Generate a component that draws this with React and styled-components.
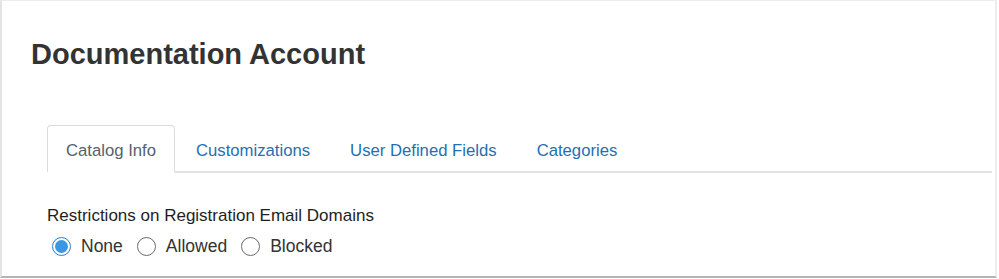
import React, { useState } from "react";
import styled, { createGlobalStyle } from "styled-components";

const Global = createGlobalStyle`
  html, body { margin: 0; padding: 0; background: #ffffff; }
  body { font-family: "Liberation Sans", Arial, Helvetica, sans-serif; }
`;

const Frame = styled.div`
  box-sizing: border-box;
  width: 997px;
  height: 278px;
  border-top: 1px solid #ececec;
  border-left: 2px solid #e4e4e4;
  border-right: 2px solid #ececec;
  border-bottom: 2px solid #b4b4b4;
  background: #fff;
  padding: 37px 0 0 29px;
`;

const Title = styled.h1`
  margin: 0;
  font-size: 29px;
  font-weight: 700;
  color: #333333;
  line-height: 32px;
`;

const Content = styled.div`
  padding: 55px 3px 0 16px;
`;

const TabBar = styled.ul`
  list-style: none;
  margin: 0;
  padding: 0;
  display: flex;
  border-bottom: 2px solid #e2e2e2;
  height: 46px;
`;

const Tab = styled.li`
  box-sizing: border-box;
  height: 48px;
  margin-bottom: -2px;
  margin-right: 2px;
  padding: 5px 18px 0;
  display: flex;
  align-items: center;
  font-size: 16.7px;
  border: 1px solid ${(p) => (p.$active ? "#dcdcdc" : "transparent")};
  border-bottom: 2px solid ${(p) => (p.$active ? "#fff" : "transparent")};
  border-radius: 4px 4px 0 0;
  color: ${(p) => (p.$active ? "#56616c" : "#1f6fb2")};
  background: ${(p) => (p.$active ? "#fff" : "transparent")};
  cursor: pointer;
`;

const Section = styled.div`
  padding-top: 33px;
`;

const Label = styled.div`
  font-size: 17px;
  color: #1e1e1e;
  line-height: 20px;
`;

const RadioRow = styled.div`
  display: flex;
  align-items: center;
  margin-top: 10px;
  padding-left: 5px;
`;

const RadioLabel = styled.label`
  display: flex;
  align-items: center;
  font-size: 17.5px;
  line-height: 20px;
  color: #333;
  margin-right: 14px;
  cursor: pointer;
`;

const Circle = styled.span`
  box-sizing: border-box;
  width: 19px;
  height: 19px;
  border-radius: 50%;
  border: 1.5px solid ${(p) => (p.$checked ? "#2a7ccf" : "#6b6b6b")};
  background: #fff;
  margin-right: 10px;
  display: flex;
  align-items: center;
  justify-content: center;
  &::after {
    content: "";
    width: 13px;
    height: 13px;
    border-radius: 50%;
    background: ${(p) => (p.$checked ? "#3b97e3" : "transparent")};
  }
`;

const tabs = ["Catalog Info", "Customizations", "User Defined Fields", "Categories"];
const options = ["None", "Allowed", "Blocked"];

export default function App() {
  const [tab, setTab] = useState(0);
  const [opt, setOpt] = useState(0);
  return (
    <>
      <Global />
      <Frame>
        <Title>Documentation Account</Title>
        <Content>
          <TabBar>
            {tabs.map((t, i) => (
              <Tab key={t} $active={i === tab} onClick={() => setTab(i)}>
                {t}
              </Tab>
            ))}
          </TabBar>
          <Section>
            <Label>Restrictions on Registration Email Domains</Label>
            <RadioRow>
              {options.map((o, i) => (
                <RadioLabel key={o} onClick={() => setOpt(i)}>
                  <Circle $checked={i === opt} />
                  {o}
                </RadioLabel>
              ))}
            </RadioRow>
          </Section>
        </Content>
      </Frame>
    </>
  );
}
